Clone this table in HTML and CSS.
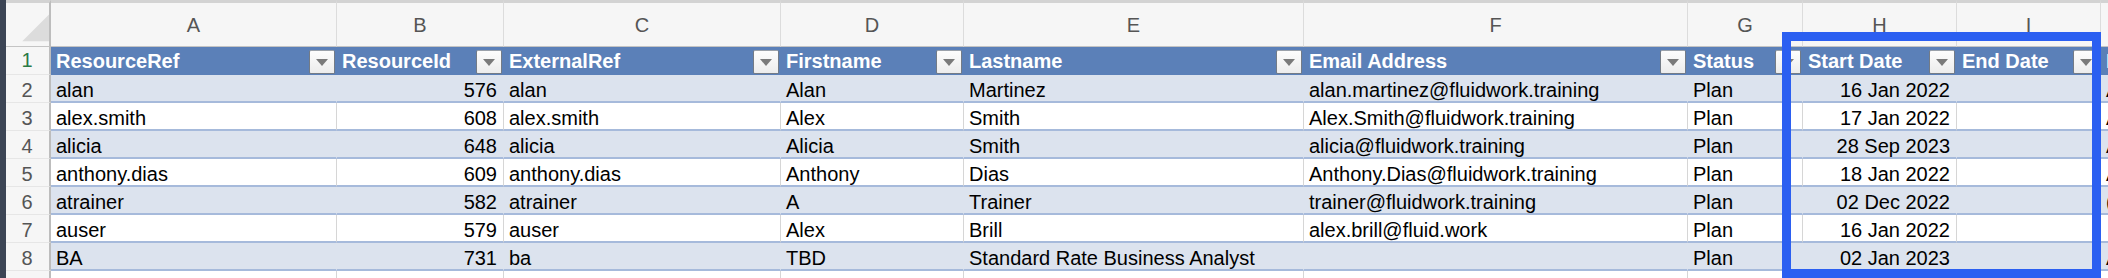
FILE: index.html
```html
<!DOCTYPE html>
<html lang="en">
<head>
<meta charset="utf-8">
<title>Resources</title>
<link rel="stylesheet" href="styles.css">
</head>
<body>
<div class="app">
  <div class="edge"></div>
  <div class="sheet-wrap">
    <div class="sheet">
      <div class="colhead corner"><svg width="45" height="43" viewBox="0 0 45 43"><polygon points="17,39 46,39 46,10" fill="#dcdcdc"/></svg></div>
      <div class="colhead">A</div>
      <div class="colhead">B</div>
      <div class="colhead">C</div>
      <div class="colhead">D</div>
      <div class="colhead">E</div>
      <div class="colhead">F</div>
      <div class="colhead">G</div>
      <div class="colhead">H</div>
      <div class="colhead">I</div>
      <div class="colhead">J</div>

      <div class="row head">
        <div class="rownum sel">1</div>
        <div class="th"><span>ResourceRef</span><span class="fbtn"></span></div>
        <div class="th"><span>ResourceId</span><span class="fbtn"></span></div>
        <div class="th"><span>ExternalRef</span><span class="fbtn"></span></div>
        <div class="th"><span>Firstname</span><span class="fbtn"></span></div>
        <div class="th"><span>Lastname</span><span class="fbtn"></span></div>
        <div class="th"><span>Email Address</span><span class="fbtn"></span></div>
        <div class="th"><span>Status</span><span class="fbtn"></span></div>
        <div class="th"><span>Start Date</span><span class="fbtn"></span></div>
        <div class="th"><span>End Date</span><span class="fbtn"></span></div>
        <div class="th"><span>Employment</span><span class="fbtn"></span></div>
      </div>

      <div class="row band">
        <div class="rownum">2</div>
        <div class="td">alan</div>
        <div class="td num">576</div>
        <div class="td">alan</div>
        <div class="td">Alan</div>
        <div class="td">Martinez</div>
        <div class="td">alan.martinez@fluidwork.training</div>
        <div class="td">Plan</div>
        <div class="td num">16 Jan 2022</div>
        <div class="td"></div>
        <div class="td">Active</div>
      </div>

      <div class="row plain">
        <div class="rownum">3</div>
        <div class="td">alex.smith</div>
        <div class="td num">608</div>
        <div class="td">alex.smith</div>
        <div class="td">Alex</div>
        <div class="td">Smith</div>
        <div class="td">Alex.Smith@fluidwork.training</div>
        <div class="td">Plan</div>
        <div class="td num">17 Jan 2022</div>
        <div class="td"></div>
        <div class="td">Active</div>
      </div>

      <div class="row band">
        <div class="rownum">4</div>
        <div class="td">alicia</div>
        <div class="td num">648</div>
        <div class="td">alicia</div>
        <div class="td">Alicia</div>
        <div class="td">Smith</div>
        <div class="td">alicia@fluidwork.training</div>
        <div class="td">Plan</div>
        <div class="td num">28 Sep 2023</div>
        <div class="td"></div>
        <div class="td">Active</div>
      </div>

      <div class="row plain">
        <div class="rownum">5</div>
        <div class="td">anthony.dias</div>
        <div class="td num">609</div>
        <div class="td">anthony.dias</div>
        <div class="td">Anthony</div>
        <div class="td">Dias</div>
        <div class="td">Anthony.Dias@fluidwork.training</div>
        <div class="td">Plan</div>
        <div class="td num">18 Jan 2022</div>
        <div class="td"></div>
        <div class="td">Active</div>
      </div>

      <div class="row band">
        <div class="rownum">6</div>
        <div class="td">atrainer</div>
        <div class="td num">582</div>
        <div class="td">atrainer</div>
        <div class="td">A</div>
        <div class="td">Trainer</div>
        <div class="td">trainer@fluidwork.training</div>
        <div class="td">Plan</div>
        <div class="td num">02 Dec 2022</div>
        <div class="td"></div>
        <div class="td">(blank)</div>
      </div>

      <div class="row plain">
        <div class="rownum">7</div>
        <div class="td">auser</div>
        <div class="td num">579</div>
        <div class="td">auser</div>
        <div class="td">Alex</div>
        <div class="td">Brill</div>
        <div class="td">alex.brill@fluid.work</div>
        <div class="td">Plan</div>
        <div class="td num">16 Jan 2022</div>
        <div class="td"></div>
        <div class="td"></div>
      </div>

      <div class="row band">
        <div class="rownum">8</div>
        <div class="td">BA</div>
        <div class="td num">731</div>
        <div class="td">ba</div>
        <div class="td">TBD</div>
        <div class="td">Standard Rate Business Analyst</div>
        <div class="td"></div>
        <div class="td">Plan</div>
        <div class="td num">02 Jan 2023</div>
        <div class="td"></div>
        <div class="td">Active</div>
      </div>

      <div class="row plain">
        <div class="rownum">9</div>
        <div class="td"></div>
        <div class="td"></div>
        <div class="td"></div>
        <div class="td"></div>
        <div class="td"></div>
        <div class="td"></div>
        <div class="td"></div>
        <div class="td"></div>
        <div class="td"></div>
        <div class="td"></div>
      </div>
    </div>
    <div class="selection"></div>
  </div>
</div>
</body>
</html>
```

FILE: styles.css
```css
* { box-sizing: border-box; }

html, body {
  margin: 0;
  padding: 0;
  background: #ffffff;
}

body {
  font-family: "Liberation Sans", Arial, Helvetica, sans-serif;
  font-size: 20px;
  color: #000;
}

.app {
  display: flex;
  width: 2108px;
  height: 278px;
  overflow: hidden;
}

.edge {
  width: 6px;
  flex: none;
  background: #3c4555;
}

.sheet-wrap {
  position: relative;
  flex: 1;
  overflow: hidden;
}

.sheet {
  display: grid;
  grid-template-columns: 45px 286px 167px 277px 183px 340px 384px 115px 154px 144px 200px;
  grid-template-rows: 47px repeat(9, 28px);
  width: max-content;
}

.colhead {
  background: #f6f6f6;
  border-top: 3px solid #d3d3d3;
  border-bottom: 1px solid #c4c4c4;
  border-right: 1px solid #dcdcdc;
  color: #555;
  display: flex;
  align-items: center;
  justify-content: center;
  line-height: 22px;
}

.colhead.corner {
  border-right: 2px solid #bdbdbd;
  align-items: flex-start;
  justify-content: flex-start;
}

.colhead.corner svg { display: block; }

.row { display: contents; }

.rownum {
  background: #f6f6f6;
  border-right: 2px solid #bdbdbd;
  border-bottom: 1px solid #e6e6e6;
  color: #555;
  display: flex;
  align-items: flex-end;
  justify-content: center;
  line-height: 22px;
  padding-bottom: 1px;
  padding-right: 1px;
}

.rownum.sel { color: #2b7a46; padding-bottom: 3px; }

.th {
  background: #5b80b8;
  color: #fff;
  font-weight: bold;
  display: flex;
  align-items: flex-end;
  justify-content: space-between;
  line-height: 22px;
  padding: 0 2px 3px 5px;
  white-space: nowrap;
}

.fbtn {
  flex: none;
  width: 26px;
  height: 24px;
  margin-bottom: -2px;
  border: 1px solid #737b86;
  border-top-color: #9aa1aa;
  border-radius: 2px;
  background: linear-gradient(#fdfdfd, #ececec);
  display: flex;
  align-items: center;
  justify-content: center;
}

.fbtn::after {
  content: "";
  width: 0;
  height: 0;
  border-left: 6px solid transparent;
  border-right: 6px solid transparent;
  border-top: 7px solid #7a7a7a;
}

.td {
  display: flex;
  align-items: flex-end;
  line-height: 22px;
  padding: 0 5px 0 5px;
  white-space: nowrap;
  border-bottom: 2px solid #a6badb;
  border-right: 1px solid transparent;
}

.td.num { justify-content: flex-end; padding-right: 6px; }

.band .td { background: #dce3ee; }

.plain .td {
  background: #ffffff;
  border-right-color: #d6d6d6;
}

.selection {
  position: absolute;
  left: 1776px;
  top: 32px;
  width: 319px;
  height: 246px;
  border: 9px solid #2b5ff1;
  pointer-events: none;
}
```
